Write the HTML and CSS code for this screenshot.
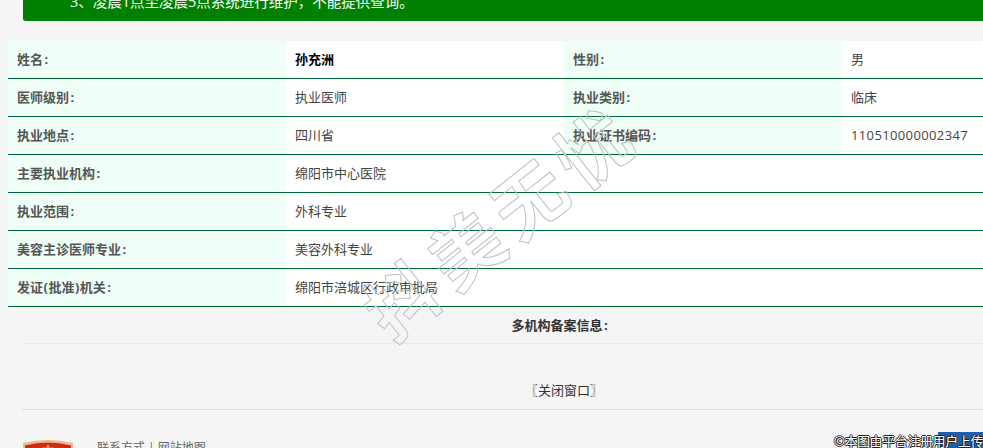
FILE: index.html
```html
<!DOCTYPE html>
<html lang="zh-CN">
<head>
<meta charset="utf-8">
<title>医师信息</title>
<link rel="stylesheet" href="styles.css">
</head>
<body>
<div class="page">
  <div class="notice"><p>3、凌晨1点至凌晨5点系统进行维护，不能提供查询。</p></div>
  <table class="info">
    <colgroup><col class="c"><col class="c"><col class="c"><col class="c"></colgroup>
    <tr><th>姓名<span class="colon">:</span></th><td class="name">孙充洲</td><th>性别<span class="colon">:</span></th><td>男</td></tr>
    <tr><th>医师级别<span class="colon">:</span></th><td>执业医师</td><th>执业类别<span class="colon">:</span></th><td>临床</td></tr>
    <tr><th>执业地点<span class="colon">:</span></th><td>四川省</td><th>执业证书编码<span class="colon">:</span></th><td class="num">110510000002347</td></tr>
    <tr><th>主要执业机构<span class="colon">:</span></th><td colspan="3">绵阳市中心医院</td></tr>
    <tr><th>执业范围<span class="colon">:</span></th><td colspan="3">外科专业</td></tr>
    <tr><th>美容主诊医师专业<span class="colon">:</span></th><td colspan="3">美容外科专业</td></tr>
    <tr><th>发证<span class="paren">(</span>批准<span class="paren">)</span>机关<span class="colon">:</span></th><td colspan="3">绵阳市涪城区行政审批局</td></tr>
  </table>
  <div class="multi">多机构备案信息<span class="colon">:</span></div>
  <div class="close">〖关闭窗口〗</div>
  <footer class="foot">
    <svg class="emblem" viewBox="0 0 50 30" aria-hidden="true">
      <path d="M0 30V4Q25 -2 50 4V30Z" fill="#e6bb8e"/>
      <path d="M2 30V6.5Q25 0.5 48 6.5V30Z" fill="#cf2a14"/>
      <path d="M25 5l2 4 3-1v3h-10v-3l3 1Z" fill="#e8a070"/>
    </svg>
    <div class="links">联系方式 | 网站地图</div>
  </footer>
</div>
<div class="mark">抖美无忧</div>
<div class="btn"></div>
<div class="credit">©本图由平台注册用户上传</div>
</body>
</html>
```
FILE: styles.css
```css
html, body {
  margin: 0;
  height: 100%;
  overflow: hidden;
}
body {
  position: relative;
  background: #f5f5f5;
  color: #444;
  font: 13px/18px "Open Sans", "Noto Sans CJK SC", sans-serif;
}
.page {
  width: 1128px;
  padding-left: 8px;
  box-sizing: border-box;
}
.notice {
  height: 21px;
  margin-left: 15px;
  background: #008000;
  border-radius: 0 0 0 3px;
  box-shadow: 0 0 1px #c9a0a0;
  color: #fff;
  overflow: hidden;
  display: flex;
  align-items: flex-end;
  padding-left: 47px;
  font-size: 14.5px;
}
.notice p {
  margin: 0 0 10px;
  white-space: nowrap;
}
.info {
  margin-top: 20px;
  width: 1112px;
  table-layout: fixed;
  border-collapse: separate;
  border-spacing: 0;
  background: #fff;
}
.c { width: 278px; }
.info th, .info td {
  padding: 0 9px 2px;
  height: 38px;
  text-align: left;
  font-weight: 400;
  box-sizing: border-box;
  border-bottom: 1px solid #006a35;
}
.info th {
  background: #efffF7;
  color: #555;
  font-weight: 700;
}
.info .name { color: #000; font-weight: 700; }
.num { letter-spacing: .37px; }
.colon { padding-left: 1.5px; }
.paren { padding: 0 .5px; }
.multi {
  height: 36px;
  line-height: 36px;
  margin-left: 14px;
  border-bottom: 1px solid #eaeaea;
  text-align: center;
  font-weight: 700;
  color: #333;
  width: 1084px;
  text-indent: -9px;
}
.close {
  height: 65px;
  margin-left: 14px;
  width: 1084px;
  line-height: 93px;
  text-align: center;
  color: #333;
  border-bottom: 1px solid #dcdcdc;
}
.foot {
  display: flex;
  gap: 24px;
  margin: 29px 0 0 15px;
}
.emblem { width: 50px; height: 30px; flex: none; }
.links { padding-top: 1px; color: #666; font-size: 12px; line-height: 16px; }
.mark {
  position: absolute;
  left: 337px;
  top: 183px;
  font: 700 72px/1 "Noto Sans CJK SC", sans-serif;
  letter-spacing: 9px;
  color: transparent;
  -webkit-text-stroke: 1px #c0c0c0;
  transform: rotate(-38.5deg);
  white-space: nowrap;
}
.btn {
  position: absolute;
  left: 938px;
  top: 432px;
  width: 60px;
  height: 30px;
  background: #1a62ae;
}
.credit {
  position: absolute;
  right: 0;
  top: 432px;
  color: #fff;
  font-size: 13px;
  letter-spacing: -.4px;
  white-space: nowrap;
  text-shadow: -1px 0 #222, 1px 0 #222, 0 -1px #222, 0 1px #222;
}
```
